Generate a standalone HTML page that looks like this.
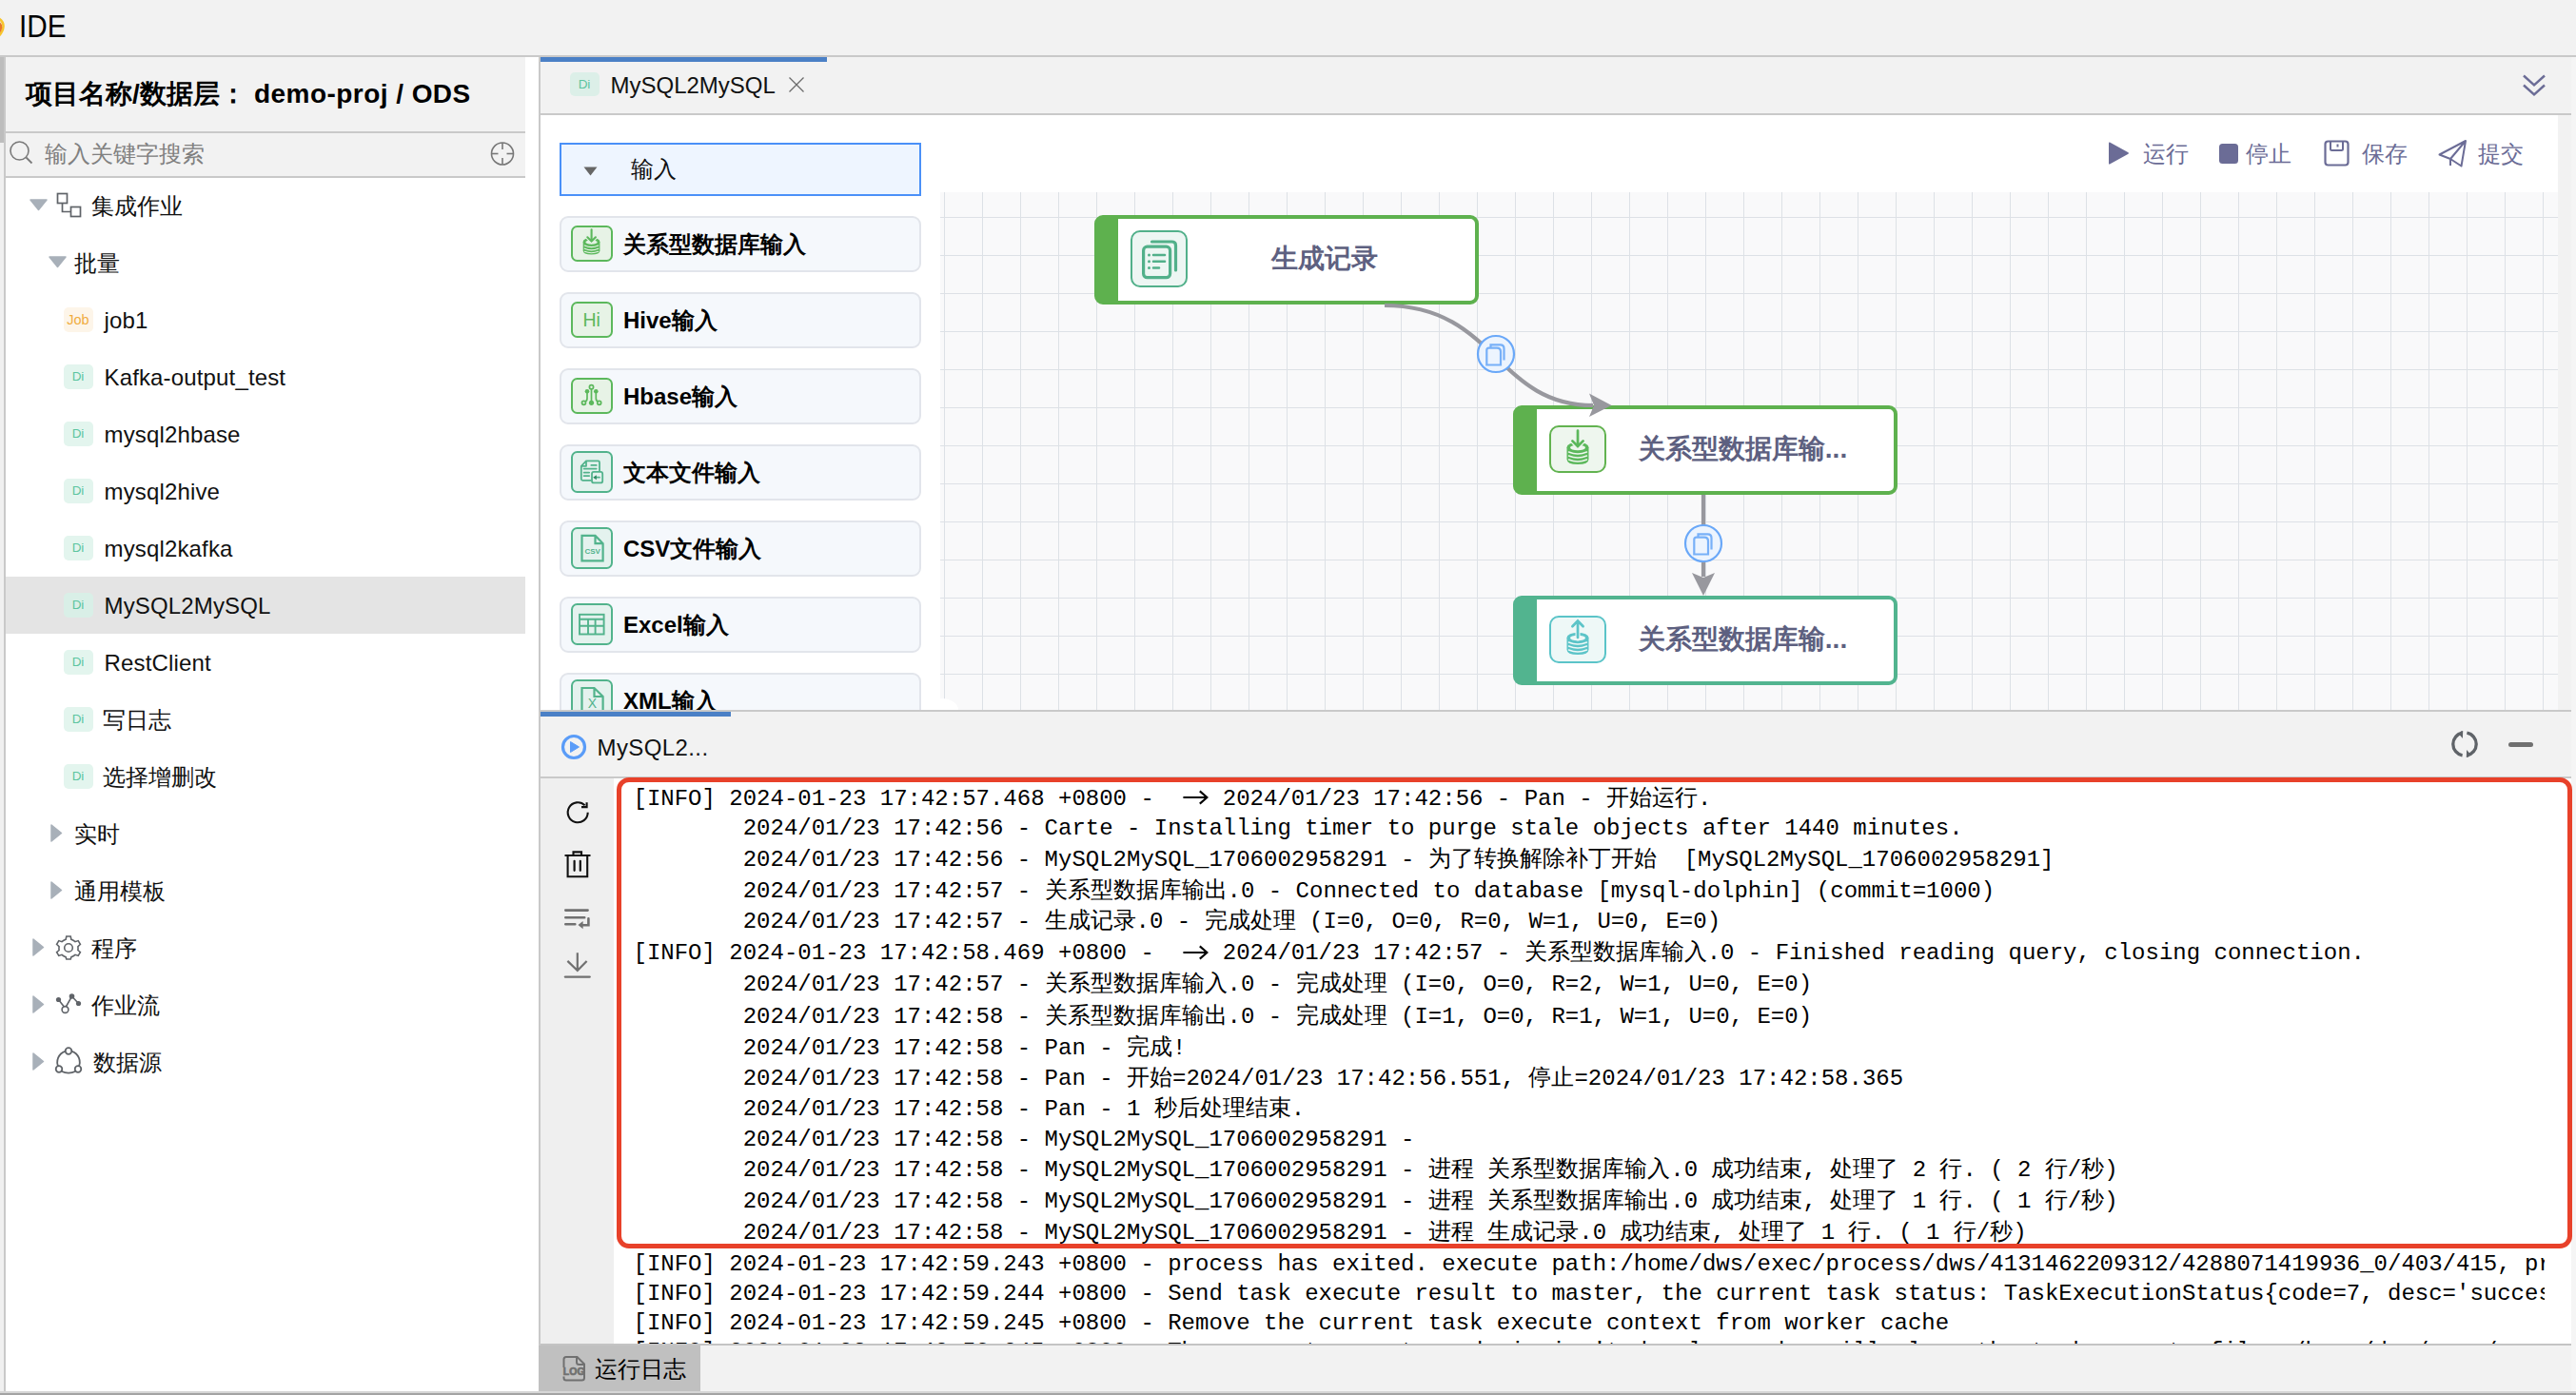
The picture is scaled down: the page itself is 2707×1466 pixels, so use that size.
<!DOCTYPE html>
<html><head><meta charset="utf-8"><style>
*{margin:0;padding:0;box-sizing:border-box}
html,body{width:2707px;height:1466px;overflow:hidden;background:#f2f2f2;font-family:"Liberation Sans",sans-serif;position:relative}
svg{position:absolute;overflow:visible}
</style></head><body>
<div style="position:absolute;left:0px;top:0px;width:2707px;height:58px;background:#f2f2f2"></div>
<svg style="left:0;top:15px" width="8" height="26" viewBox="0 0 8 26"><path d="M-6 2 Q4 6 3.5 13 Q3 20 -4 25" stroke="#f7c52c" stroke-width="2.5" fill="none"/><path d="M-6 6 Q1.5 9 1 14 Q0.5 19 -5 22" stroke="#e8772a" stroke-width="2.5" fill="none"/></svg>
<div style="position:absolute;left:20.4px;top:11.89px;height:32.5px;line-height:32.5px;font-size:32.5px;font-family:'Liberation Sans', sans-serif;white-space:pre;color:#000;transform:scaleX(0.915);transform-origin:0 0">IDE</div>
<div style="position:absolute;left:0px;top:58px;width:2707px;height:2px;background:#c9c9c9"></div>
<div style="position:absolute;left:0px;top:60px;width:5px;height:1402px;background:#f0f0f0"></div>
<div style="position:absolute;left:0px;top:60px;width:4px;height:90px;background:#bdbdbd"></div>
<div style="position:absolute;left:4px;top:60px;width:2px;height:1402px;background:#c9c9c9"></div>
<div style="position:absolute;left:6px;top:60px;width:560px;height:1402px;background:#fff"></div>
<div style="position:absolute;left:6px;top:60px;width:546px;height:78px;background:#f2f2f2"></div>
<div style="position:absolute;left:6px;top:138px;width:546px;height:2px;background:#c9c9c9"></div>
<div style="position:absolute;left:6px;top:140px;width:546px;height:45px;background:#f2f2f2"></div>
<div style="position:absolute;left:6px;top:185px;width:546px;height:2px;background:#c9c9c9"></div>
<div style="position:absolute;left:27px;top:85.10px;height:28px;line-height:28px;font-size:28px;font-family:'Liberation Sans', sans-serif;white-space:pre;font-weight:bold;color:#000">项目名称/数据层：<span style="letter-spacing:0.45px"> demo-proj / ODS</span></div>
<svg style="left:9px;top:147px" width="28" height="28" viewBox="0 0 28 28"><circle cx="11.5" cy="11.5" r="9.5" stroke="#7a7a7a" stroke-width="1.6" fill="none"/><line x1="18.5" y1="18.5" x2="24.5" y2="24.5" stroke="#7a7a7a" stroke-width="1.8"/></svg>
<div style="position:absolute;left:47px;top:149.68px;height:24px;line-height:24px;font-size:24px;font-family:'Liberation Sans', sans-serif;white-space:pre;color:#808080">输入关键字搜索</div>
<svg style="left:514px;top:148px" width="28" height="28" viewBox="0 0 28 28"><circle cx="14" cy="13.5" r="11.5" stroke="#777" stroke-width="1.6" fill="none"/><line x1="14" y1="2" x2="14" y2="9" stroke="#777" stroke-width="1.6"/><line x1="14" y1="18" x2="14" y2="25" stroke="#777" stroke-width="1.6"/><line x1="2.5" y1="13.5" x2="9.5" y2="13.5" stroke="#777" stroke-width="1.6"/><line x1="18.5" y1="13.5" x2="25.5" y2="13.5" stroke="#777" stroke-width="1.6"/></svg>
<div style="position:absolute;left:566px;top:60px;width:2px;height:1402px;background:#c9c9c9"></div>
<div style="position:absolute;left:6px;top:606px;width:546px;height:60px;background:#e4e4e4"></div>
<svg style="left:31px;top:209.0px" width="19" height="12" viewBox="0 0 19 12"><path d="M1 1 L18 1 L9.5 11.5 Z" fill="#a8b0b9" stroke="#a8b0b9" stroke-width="1.5" stroke-linejoin="round"/></svg>
<svg style="left:59px;top:202px" width="27" height="27" viewBox="0 0 27 27"><rect x="1.5" y="1.5" width="10" height="10" fill="none" stroke="#5f6368" stroke-width="1.7"/><rect x="15.5" y="15.5" width="10" height="10" fill="none" stroke="#5f6368" stroke-width="1.7"/><path d="M6.5 11.5 V20.5 H15.5" fill="none" stroke="#5f6368" stroke-width="1.7"/></svg>
<div style="position:absolute;left:96px;top:204.68px;height:24px;line-height:24px;font-size:24px;font-family:'Liberation Sans', sans-serif;white-space:pre;color:#111">集成作业</div>
<svg style="left:51px;top:269.0px" width="19" height="12" viewBox="0 0 19 12"><path d="M1 1 L18 1 L9.5 11.5 Z" fill="#a8b0b9" stroke="#a8b0b9" stroke-width="1.5" stroke-linejoin="round"/></svg>
<div style="position:absolute;left:78px;top:264.68px;height:24px;line-height:24px;font-size:24px;font-family:'Liberation Sans', sans-serif;white-space:pre;color:#111">批量</div>
<div style="position:absolute;left:67px;top:323.0px;width:31px;height:26px;border-radius:5px;background:#fdf5e9;color:#f0ac3e;font-size:14.5px;line-height:26px;text-align:center;text-indent:-1px;font-family:'Liberation Sans',sans-serif">Job</div>
<div style="position:absolute;left:109.5px;top:324.68px;height:24px;line-height:24px;font-size:24px;font-family:'Liberation Sans', sans-serif;white-space:pre;color:#111;letter-spacing:0.15px">job1</div>
<div style="position:absolute;left:67px;top:383.0px;width:31px;height:26px;border-radius:5px;background:#e3f5ee;color:#5cc5a0;font-size:13.5px;line-height:26px;text-align:center;text-indent:-1px;font-family:'Liberation Sans',sans-serif">Di</div>
<div style="position:absolute;left:109.5px;top:384.68px;height:24px;line-height:24px;font-size:24px;font-family:'Liberation Sans', sans-serif;white-space:pre;color:#111;letter-spacing:0.15px">Kafka-output_test</div>
<div style="position:absolute;left:67px;top:443.0px;width:31px;height:26px;border-radius:5px;background:#e3f5ee;color:#5cc5a0;font-size:13.5px;line-height:26px;text-align:center;text-indent:-1px;font-family:'Liberation Sans',sans-serif">Di</div>
<div style="position:absolute;left:109.5px;top:444.68px;height:24px;line-height:24px;font-size:24px;font-family:'Liberation Sans', sans-serif;white-space:pre;color:#111;letter-spacing:0.15px">mysql2hbase</div>
<div style="position:absolute;left:67px;top:503.0px;width:31px;height:26px;border-radius:5px;background:#e3f5ee;color:#5cc5a0;font-size:13.5px;line-height:26px;text-align:center;text-indent:-1px;font-family:'Liberation Sans',sans-serif">Di</div>
<div style="position:absolute;left:109.5px;top:504.68px;height:24px;line-height:24px;font-size:24px;font-family:'Liberation Sans', sans-serif;white-space:pre;color:#111;letter-spacing:0.15px">mysql2hive</div>
<div style="position:absolute;left:67px;top:563.0px;width:31px;height:26px;border-radius:5px;background:#e3f5ee;color:#5cc5a0;font-size:13.5px;line-height:26px;text-align:center;text-indent:-1px;font-family:'Liberation Sans',sans-serif">Di</div>
<div style="position:absolute;left:109.5px;top:564.68px;height:24px;line-height:24px;font-size:24px;font-family:'Liberation Sans', sans-serif;white-space:pre;color:#111;letter-spacing:0.15px">mysql2kafka</div>
<div style="position:absolute;left:67px;top:623.0px;width:31px;height:26px;border-radius:5px;background:#d9efe7;color:#5cc5a0;font-size:13.5px;line-height:26px;text-align:center;text-indent:-1px;font-family:'Liberation Sans',sans-serif">Di</div>
<div style="position:absolute;left:109.5px;top:624.68px;height:24px;line-height:24px;font-size:24px;font-family:'Liberation Sans', sans-serif;white-space:pre;color:#111;letter-spacing:0.15px">MySQL2MySQL</div>
<div style="position:absolute;left:67px;top:683.0px;width:31px;height:26px;border-radius:5px;background:#e3f5ee;color:#5cc5a0;font-size:13.5px;line-height:26px;text-align:center;text-indent:-1px;font-family:'Liberation Sans',sans-serif">Di</div>
<div style="position:absolute;left:109.5px;top:684.68px;height:24px;line-height:24px;font-size:24px;font-family:'Liberation Sans', sans-serif;white-space:pre;color:#111;letter-spacing:0.15px">RestClient</div>
<div style="position:absolute;left:67px;top:743.0px;width:31px;height:26px;border-radius:5px;background:#e3f5ee;color:#5cc5a0;font-size:13.5px;line-height:26px;text-align:center;text-indent:-1px;font-family:'Liberation Sans',sans-serif">Di</div>
<div style="position:absolute;left:108px;top:744.68px;height:24px;line-height:24px;font-size:24px;font-family:'Liberation Sans', sans-serif;white-space:pre;color:#111">写日志</div>
<div style="position:absolute;left:67px;top:803.0px;width:31px;height:26px;border-radius:5px;background:#e3f5ee;color:#5cc5a0;font-size:13.5px;line-height:26px;text-align:center;text-indent:-1px;font-family:'Liberation Sans',sans-serif">Di</div>
<div style="position:absolute;left:108px;top:804.68px;height:24px;line-height:24px;font-size:24px;font-family:'Liberation Sans', sans-serif;white-space:pre;color:#111">选择增删改</div>
<svg style="left:53px;top:865.5px" width="12" height="19" viewBox="0 0 12 19"><path d="M1 1 L11.5 9.5 L1 18 Z" fill="#a8b0b9" stroke="#a8b0b9" stroke-width="1.5" stroke-linejoin="round"/></svg>
<div style="position:absolute;left:78px;top:864.68px;height:24px;line-height:24px;font-size:24px;font-family:'Liberation Sans', sans-serif;white-space:pre;color:#111">实时</div>
<svg style="left:53px;top:925.5px" width="12" height="19" viewBox="0 0 12 19"><path d="M1 1 L11.5 9.5 L1 18 Z" fill="#a8b0b9" stroke="#a8b0b9" stroke-width="1.5" stroke-linejoin="round"/></svg>
<div style="position:absolute;left:78px;top:924.68px;height:24px;line-height:24px;font-size:24px;font-family:'Liberation Sans', sans-serif;white-space:pre;color:#111">通用模板</div>
<svg style="left:34px;top:985.5px" width="12" height="19" viewBox="0 0 12 19"><path d="M1 1 L11.5 9.5 L1 18 Z" fill="#a8b0b9" stroke="#a8b0b9" stroke-width="1.5" stroke-linejoin="round"/></svg>
<svg style="left:58px;top:982px" width="28" height="28" viewBox="0 0 28 28"><g transform="translate(14 14)" fill="none" stroke="#5f6368" stroke-width="1.6"><path d="M-2.2 -12 L2.2 -12 L2.9 -8.7 Q5.2 -7.9 7 -6.3 L10.2 -7.4 L12.4 -3.6 L9.9 -1.3 Q10.2 1.3 9.9 2.5 L12.4 4.6 L10.2 8.4 L7 7.3 Q5.2 8.9 2.9 9.7 L2.2 12 L-2.2 12 L-2.9 9.7 Q-5.2 8.9 -7 7.3 L-10.2 8.4 L-12.4 4.6 L-9.9 2.5 Q-10.2 1.3 -9.9 -1.3 L-12.4 -3.6 L-10.2 -7.4 L-7 -6.3 Q-5.2 -7.9 -2.9 -8.7 Z"/><circle r="4.3"/></g></svg>
<div style="position:absolute;left:96px;top:984.68px;height:24px;line-height:24px;font-size:24px;font-family:'Liberation Sans', sans-serif;white-space:pre;color:#111">程序</div>
<svg style="left:34px;top:1045.5px" width="12" height="19" viewBox="0 0 12 19"><path d="M1 1 L11.5 9.5 L1 18 Z" fill="#a8b0b9" stroke="#a8b0b9" stroke-width="1.5" stroke-linejoin="round"/></svg>
<svg style="left:58px;top:1043px" width="30" height="26" viewBox="0 0 30 26"><path d="M3.5 7.5 L10.5 16.5 L17.5 4 L24.5 11.5" fill="none" stroke="#5f6368" stroke-width="1.6"/><circle cx="3.5" cy="7.5" r="2.6" fill="#5f6368"/><circle cx="17.5" cy="4" r="2.8" fill="#5f6368"/><circle cx="24.5" cy="11.5" r="2.6" fill="#5f6368"/><circle cx="10.5" cy="18" r="3.4" fill="#fff" stroke="#5f6368" stroke-width="1.6"/></svg>
<div style="position:absolute;left:96px;top:1044.68px;height:24px;line-height:24px;font-size:24px;font-family:'Liberation Sans', sans-serif;white-space:pre;color:#111">作业流</div>
<svg style="left:34px;top:1105.5px" width="12" height="19" viewBox="0 0 12 19"><path d="M1 1 L11.5 9.5 L1 18 Z" fill="#a8b0b9" stroke="#a8b0b9" stroke-width="1.5" stroke-linejoin="round"/></svg>
<svg style="left:57px;top:1100px" width="30" height="30" viewBox="0 0 30 30"><path d="M11.3 4.8 A12 12 0 0 0 4.5 21.5 M18.7 4.8 A12 12 0 0 1 25.5 21.5 M7.5 25.7 Q15 29.5 22.5 25.7" fill="none" stroke="#5f6368" stroke-width="1.8"/><circle cx="15" cy="4.5" r="3.3" fill="#fff" stroke="#5f6368" stroke-width="1.8"/><circle cx="5" cy="23.5" r="3.3" fill="#fff" stroke="#5f6368" stroke-width="1.8"/><circle cx="25" cy="23.5" r="3.3" fill="#fff" stroke="#5f6368" stroke-width="1.8"/></svg>
<div style="position:absolute;left:98px;top:1104.68px;height:24px;line-height:24px;font-size:24px;font-family:'Liberation Sans', sans-serif;white-space:pre;color:#111">数据源</div>
<div style="position:absolute;left:568px;top:60px;width:2134px;height:59px;background:#f2f2f2"></div>
<div style="position:absolute;left:568px;top:119px;width:2134px;height:2px;background:#c9c9c9"></div>
<div style="position:absolute;left:2702px;top:60px;width:5px;height:1402px;background:#f5f5f5"></div>
<div style="position:absolute;left:568px;top:60px;width:301px;height:5px;background:#4b80c6"></div>
<div style="position:absolute;left:599px;top:76.0px;width:31px;height:25px;border-radius:5px;background:#dcefe8;color:#5cc5a0;font-size:13.5px;line-height:25px;text-align:center;text-indent:-1px;font-family:'Liberation Sans',sans-serif">Di</div>
<div style="position:absolute;left:641.5px;top:78.48px;height:24px;line-height:24px;font-size:24px;font-family:'Liberation Sans', sans-serif;white-space:pre;color:#111;letter-spacing:0px">MySQL2MySQL</div>
<svg style="left:828px;top:80px" width="18" height="18" viewBox="0 0 18 18"><path d="M1.5 1.5 L16.5 16.5 M16.5 1.5 L1.5 16.5" stroke="#6a6a6a" stroke-width="1.3"/></svg>
<svg style="left:2650px;top:77px" width="26" height="26" viewBox="0 0 26 26"><path d="M2 2.5 L13 12.5 L24 2.5 M2 12.5 L13 22.5 L24 12.5" fill="none" stroke="#6b6c96" stroke-width="2.4"/></svg>
<div style="position:absolute;left:568px;top:121px;width:2134px;height:625px;background:#fff"></div>
<div style="position:absolute;left:2688px;top:121px;width:14px;height:625px;background:#f2f2f2"></div>
<svg style="left:988px;top:202px" width="1700" height="544" viewBox="0 0 1700 544"><rect width="1700" height="544" fill="#f9f9fa"/><path d="M4.5 0 V544 M44.5 0 V544 M84.5 0 V544 M124.5 0 V544 M164.5 0 V544 M204.5 0 V544 M244.5 0 V544 M284.5 0 V544 M324.5 0 V544 M364.5 0 V544 M404.5 0 V544 M444.5 0 V544 M484.5 0 V544 M524.5 0 V544 M564.5 0 V544 M604.5 0 V544 M644.5 0 V544 M684.5 0 V544 M724.5 0 V544 M764.5 0 V544 M804.5 0 V544 M844.5 0 V544 M884.5 0 V544 M924.5 0 V544 M964.5 0 V544 M1004.5 0 V544 M1044.5 0 V544 M1084.5 0 V544 M1124.5 0 V544 M1164.5 0 V544 M1204.5 0 V544 M1244.5 0 V544 M1284.5 0 V544 M1324.5 0 V544 M1364.5 0 V544 M1404.5 0 V544 M1444.5 0 V544 M1484.5 0 V544 M1524.5 0 V544 M1564.5 0 V544 M1604.5 0 V544 M1644.5 0 V544 M1684.5 0 V544 M0 26.5 H1700 M0 66.5 H1700 M0 106.5 H1700 M0 146.5 H1700 M0 186.5 H1700 M0 226.5 H1700 M0 266.5 H1700 M0 306.5 H1700 M0 346.5 H1700 M0 386.5 H1700 M0 426.5 H1700 M0 466.5 H1700 M0 506.5 H1700 " stroke="#dde1e6" stroke-width="1" fill="none"/></svg>
<div style="position:absolute;left:988px;top:734px;width:19px;height:12px;background:#fff;border-top-right-radius:19px 13px"></div>
<div style="position:absolute;left:568px;top:121px;width:420px;height:625px;overflow:hidden;background:#fff">
<div style="position:absolute;left:20px;top:29px;width:380px;height:56px;border:2px solid #4a90f8;background:#eef5ff"></div>
<svg style="left:45px;top:54px" width="15" height="10" viewBox="0 0 15 10"><path d="M0.5 0.5 L14.5 0.5 L7.5 9.5 Z" fill="#666"/></svg>
<div style="position:absolute;left:20px;top:105.5px;width:380px;height:59px;border:2px solid #e2e5eb;border-radius:9px;background:#f5f8fc"></div>
<div style="position:absolute;left:32.2px;top:116.3px;width:43.6px;height:37.3px;border:2px solid #5cb85c;border-radius:6.5px;background:#e7f3e6"></div>
<svg style="left:32.2px;top:116.3px" width="44" height="37.3" viewBox="0 0 44 37.3"><path d="M12.7 17 V26.5 Q12.7 30.6 21.5 30.6 Q30.4 30.6 30.4 26.5 V17 Z" fill="#5cb85c"/><ellipse cx="21.55" cy="17" rx="8.85" ry="4.2" fill="#5cb85c"/><ellipse cx="21.55" cy="17.4" rx="6.2" ry="2.1" fill="#e4f2e4"/><path d="M14.3 21 Q21.5 24.2 28.8 21 M14.3 24.2 Q21.5 27.4 28.8 24.2 M14.3 27.3 Q21.5 30.2 28.8 27.3" fill="none" stroke="#e4f2e4" stroke-width="1.2" stroke-linecap="round"/><path d="M21.6 3.8 V17.5 M16.6 11.6 L21.6 16.8 L26.6 11.6" fill="none" stroke="#e4f2e4" stroke-width="4.2" stroke-linecap="round"/><path d="M21.6 4.4 V16.5 M17.3 12.3 L21.6 16.6 L25.9 12.3" fill="none" stroke="#5cb85c" stroke-width="2.1" stroke-linecap="round"/></svg>
<div style="position:absolute;left:87px;top:123.88px;height:24px;line-height:24px;font-size:24px;font-family:'Liberation Sans', sans-serif;white-space:pre;font-weight:bold;color:#000;letter-spacing:0px">关系型数据库输入</div>
<div style="position:absolute;left:20px;top:185.5px;width:380px;height:59px;border:2px solid #e2e5eb;border-radius:9px;background:#f5f8fc"></div>
<div style="position:absolute;left:32.2px;top:196.4px;width:43.6px;height:37.3px;border:2px solid #5cb85c;border-radius:6.5px;background:#e7f3e6"></div>
<svg style="left:32.2px;top:196.4px" width="44" height="37.3" viewBox="0 0 44 37.3"><text x="21.7" y="25.6" text-anchor="middle" font-family="Liberation Sans" font-size="19.5" fill="#5cb85c">Hi</text></svg>
<div style="position:absolute;left:87px;top:203.88px;height:24px;line-height:24px;font-size:24px;font-family:'Liberation Sans', sans-serif;white-space:pre;font-weight:bold;color:#000;letter-spacing:0px">Hive输入</div>
<div style="position:absolute;left:20px;top:265.5px;width:380px;height:59px;border:2px solid #e2e5eb;border-radius:9px;background:#f5f8fc"></div>
<div style="position:absolute;left:32.2px;top:276.4px;width:43.6px;height:37.3px;border:2px solid #5cb85c;border-radius:6.5px;background:#e7f3e6"></div>
<svg style="left:32.2px;top:276.4px" width="44" height="37.3" viewBox="0 0 44 37.3"><g fill="none" stroke="#5cb85c" stroke-width="1.7"><path d="M21.5 11.5 V26 M17 14.3 V21.5 Q17 24.5 14.8 25 M26.3 14.3 V21.5 Q26.3 24.5 28.6 25"/><circle cx="21.5" cy="9.7" r="2.1"/><circle cx="13.5" cy="26.3" r="2"/><circle cx="29.7" cy="26.3" r="2"/></g><g fill="#5cb85c"><circle cx="17" cy="14.3" r="2.3"/><circle cx="26.3" cy="14.3" r="2.3"/><circle cx="21.5" cy="26.3" r="2.6"/></g></svg>
<div style="position:absolute;left:87px;top:283.88px;height:24px;line-height:24px;font-size:24px;font-family:'Liberation Sans', sans-serif;white-space:pre;font-weight:bold;color:#000;letter-spacing:0px">Hbase输入</div>
<div style="position:absolute;left:20px;top:345.5px;width:380px;height:59px;border:2px solid #e2e5eb;border-radius:9px;background:#f5f8fc"></div>
<div style="position:absolute;left:32.2px;top:353.1px;width:43.6px;height:43.8px;border:2px solid #52b38c;border-radius:6.5px;background:#e4f2ee"></div>
<svg style="left:32.2px;top:353.1px" width="44" height="43.8" viewBox="0 0 44 43.8"><g fill="none" stroke="#52b38c" stroke-width="1.8" stroke-linejoin="round"><path d="M21.5 30.8 H12.3 Q10.8 30.8 10.8 29.3 V15.8 L16 10.4 H28.5 Q30 10.4 30 11.9 V21.5"/><path d="M10.8 15.8 H16 V10.4"/><rect x="22" y="21.9" width="11.2" height="11.5" rx="2"/></g><g stroke="#52b38c" stroke-width="1.7" stroke-linecap="round"><path d="M21.3 14.9 H26.7 M13.6 18.6 H26.7 M13.6 22.6 H19.2 M13.6 26.1 H19.2 M30 27.7 H25.5"/></g><path d="M23.2 27.7 L26.8 25.2 V30.2 Z" fill="#2f8a62"/></svg>
<div style="position:absolute;left:87px;top:363.88px;height:24px;line-height:24px;font-size:24px;font-family:'Liberation Sans', sans-serif;white-space:pre;font-weight:bold;color:#000;letter-spacing:0px">文本文件输入</div>
<div style="position:absolute;left:20px;top:425.5px;width:380px;height:59px;border:2px solid #e2e5eb;border-radius:9px;background:#f5f8fc"></div>
<div style="position:absolute;left:32.2px;top:433.1px;width:43.6px;height:43.8px;border:2px solid #52b38c;border-radius:6.5px;background:#e4f2ee"></div>
<svg style="left:32.2px;top:433.1px" width="44" height="43.8" viewBox="0 0 44 43.8"><g fill="none" stroke="#52b38c" stroke-width="2.2" stroke-linejoin="miter"><path d="M11.5 8.9 H25.5 L33.6 17.1 V35.3 H11.5 Z M25.5 8.9 V17.1 H33.6"/></g><text x="22.6" y="28.2" text-anchor="middle" font-family="Liberation Sans" font-size="8" font-weight="bold" fill="#52b38c">CSV</text></svg>
<div style="position:absolute;left:87px;top:443.88px;height:24px;line-height:24px;font-size:24px;font-family:'Liberation Sans', sans-serif;white-space:pre;font-weight:bold;color:#000;letter-spacing:0px">CSV文件输入</div>
<div style="position:absolute;left:20px;top:505.5px;width:380px;height:59px;border:2px solid #e2e5eb;border-radius:9px;background:#f5f8fc"></div>
<div style="position:absolute;left:32.2px;top:513.1px;width:43.6px;height:43.8px;border:2px solid #52b38c;border-radius:6.5px;background:#e4f2ee"></div>
<svg style="left:32.2px;top:513.1px" width="44" height="43.8" viewBox="0 0 44 43.8"><g fill="none" stroke="#52b38c" stroke-width="1.9"><rect x="9" y="11.8" width="25.6" height="20.7"/><path d="M9 16.8 H34.6 M9 23.7 H34.6 M18 16.8 V32.5 M25.6 16.8 V32.5"/></g></svg>
<div style="position:absolute;left:87px;top:523.88px;height:24px;line-height:24px;font-size:24px;font-family:'Liberation Sans', sans-serif;white-space:pre;font-weight:bold;color:#000;letter-spacing:0px">Excel输入</div>
<div style="position:absolute;left:20px;top:585.5px;width:380px;height:59px;border:2px solid #e2e5eb;border-radius:9px;background:#f5f8fc"></div>
<div style="position:absolute;left:32.2px;top:593.1px;width:43.6px;height:43.8px;border:2px solid #52b38c;border-radius:6.5px;background:#e4f2ee"></div>
<svg style="left:32.2px;top:593.1px" width="44" height="43.8" viewBox="0 0 44 43.8"><g fill="none" stroke="#52b38c" stroke-width="2.2"><path d="M11.5 9 H24.5 L33.6 18 V45 H11.5 Z M24.5 9 V18 H33.6"/></g><text x="22.3" y="30" text-anchor="middle" font-family="Liberation Sans" font-size="14" fill="#52b38c">X</text></svg>
<div style="position:absolute;left:87px;top:603.88px;height:24px;line-height:24px;font-size:24px;font-family:'Liberation Sans', sans-serif;white-space:pre;font-weight:bold;color:#000;letter-spacing:0px">XML输入</div>
<div style="position:absolute;left:95px;top:44.68px;height:24px;line-height:24px;font-size:24px;font-family:'Liberation Sans', sans-serif;white-space:pre;color:#111">输入</div>
</div>
<svg style="left:2214px;top:147px" width="26" height="28" viewBox="0 0 26 28"><path d="M3 2.5 Q2 2 2 3.5 V24.5 Q2 26 3 25.5 L22.5 14.8 Q23.5 14 22.5 13.2 Z" fill="#6b6c96"/></svg>
<div style="position:absolute;left:2252px;top:150.18px;height:24px;line-height:24px;font-size:24px;font-family:'Liberation Sans', sans-serif;white-space:pre;color:#6b6c96">运行</div>
<div style="position:absolute;left:2332px;top:151px;width:20px;height:21px;background:#6b6c96;border-radius:3.5px"></div>
<div style="position:absolute;left:2360px;top:150.18px;height:24px;line-height:24px;font-size:24px;font-family:'Liberation Sans', sans-serif;white-space:pre;color:#6b6c96">停止</div>
<svg style="left:2442px;top:147px" width="28" height="28" viewBox="0 0 28 28"><rect x="1.5" y="1.5" width="24" height="25" rx="3" fill="none" stroke="#6b6c96" stroke-width="2.2"/><path d="M7 2 V9.5 Q7 11 8.5 11 H18.5 Q20 11 20 9.5 V2" fill="none" stroke="#6b6c96" stroke-width="2"/><line x1="14.5" y1="4.5" x2="14.5" y2="7.5" stroke="#6b6c96" stroke-width="2"/></svg>
<div style="position:absolute;left:2482px;top:150.18px;height:24px;line-height:24px;font-size:24px;font-family:'Liberation Sans', sans-serif;white-space:pre;color:#6b6c96">保存</div>
<svg style="left:2562px;top:146px" width="32" height="30" viewBox="0 0 32 30"><path d="M1.5 16.5 L29 2 L24.5 28.5 L13 21 Z M29 2 L13 21 V28" fill="none" stroke="#6b6c96" stroke-width="2" stroke-linejoin="round"/></svg>
<div style="position:absolute;left:2604px;top:150.18px;height:24px;line-height:24px;font-size:24px;font-family:'Liberation Sans', sans-serif;white-space:pre;color:#6b6c96">提交</div>
<div style="position:absolute;left:1150px;top:226px;width:404px;height:94px;border:4px solid #5eb14e;border-left:25px solid #5eb14e;border-radius:9px;background:#fff"></div>
<div style="position:absolute;left:1188px;top:242.0px;width:60px;height:60px;border:2px solid #52b08a;border-radius:10px;background:#edf6f3"></div>
<svg style="left:1188px;top:242.0px" width="60" height="60" viewBox="0 0 60 60"><g fill="none" stroke="#52b08a" stroke-width="3.2" stroke-linecap="round"><rect x="13.6" y="17.2" width="28" height="32.5" rx="4"/><path d="M22.5 12 H43.5 Q47.5 12 47.5 16 V42"/></g><g fill="#52b08a"><circle cx="19.5" cy="26" r="1.5"/><circle cx="19.5" cy="32.8" r="1.5"/><circle cx="19.5" cy="39.5" r="1.5"/></g><g stroke="#52b08a" stroke-width="2.6" stroke-linecap="round"><path d="M24 26 H36 M24 32.8 H36 M24 39.5 H30"/></g></svg>
<div style="position:absolute;left:1250px;top:258.10px;height:28px;line-height:28px;font-size:28px;font-family:'Liberation Sans', sans-serif;white-space:pre;font-weight:bold;color:#5d6080;width:283px;text-align:center">生成记录</div>
<div style="position:absolute;left:1590px;top:426px;width:404px;height:94px;border:4px solid #5eb14e;border-left:25px solid #5eb14e;border-radius:9px;background:#fff"></div>
<div style="position:absolute;left:1628px;top:446.5px;width:60px;height:50px;border:2px solid #62b350;border-radius:10px;background:#eef6ee"></div>
<svg style="left:1628px;top:446.5px" width="60" height="50" viewBox="0 0 60 50"><path d="M18.5 23 V35.5 Q18.5 41 30 41 Q41.5 41 41.5 35.5 V23 Z" fill="#5cb85c"/><ellipse cx="30" cy="23" rx="11.5" ry="5.2" fill="#5cb85c"/><ellipse cx="30" cy="23.5" rx="8" ry="2.7" fill="#eef6ee"/><path d="M20.5 28 Q30 32 39.5 28 M20.5 32 Q30 36 39.5 32 M20.5 36 Q30 40 39.5 36" fill="none" stroke="#eef6ee" stroke-width="1.5" stroke-linecap="round"/><path d="M30 5 V23.5 M23.6 15.6 L30 22.5 L36.4 15.6" fill="none" stroke="#eef6ee" stroke-width="5" stroke-linecap="round"/><path d="M30 5.5 V22 M24.4 16.4 L30 22 L35.6 16.4" fill="none" stroke="#5cb85c" stroke-width="2.7" stroke-linecap="round"/></svg>
<div style="position:absolute;left:1690px;top:458.30px;height:28px;line-height:28px;font-size:28px;font-family:'Liberation Sans', sans-serif;white-space:pre;font-weight:bold;color:#5d6080;width:283px;text-align:center">关系型数据库输...</div>
<div style="position:absolute;left:1590px;top:626px;width:404px;height:94px;border:4px solid #52b48f;border-left:25px solid #52b48f;border-radius:9px;background:#fff"></div>
<div style="position:absolute;left:1628px;top:646.5px;width:60px;height:50px;border:2px solid #5bc4c8;border-radius:10px;background:#eef8f7"></div>
<svg style="left:1628px;top:646.5px" width="60" height="50" viewBox="0 0 60 50"><path d="M18.5 23 V35.5 Q18.5 41 30 41 Q41.5 41 41.5 35.5 V23 Z" fill="#5cc4c8"/><ellipse cx="30" cy="23" rx="11.5" ry="5.2" fill="#5cc4c8"/><ellipse cx="30" cy="23.5" rx="8" ry="2.7" fill="#eef8f7"/><path d="M20.5 28 Q30 32 39.5 28 M20.5 32 Q30 36 39.5 32 M20.5 36 Q30 40 39.5 36" fill="none" stroke="#eef8f7" stroke-width="1.5" stroke-linecap="round"/><path d="M30 24 V5 M23.6 11.6 L30 5 L36.4 11.6" fill="none" stroke="#eef8f7" stroke-width="5" stroke-linecap="round"/><path d="M30 23 V5.5 M24.4 11.2 L30 5.5 L35.6 11.2" fill="none" stroke="#5cc4c8" stroke-width="2.7" stroke-linecap="round"/></svg>
<div style="position:absolute;left:1690px;top:658.30px;height:28px;line-height:28px;font-size:28px;font-family:'Liberation Sans', sans-serif;white-space:pre;font-weight:bold;color:#5d6080;width:283px;text-align:center">关系型数据库输...</div>
<svg style="left:0;top:0" width="2707" height="1466" viewBox="0 0 2707 1466"><path d="M1455 321 C1572 321 1572 426 1674 426" fill="none" stroke="#98989e" stroke-width="4.2"/><path d="M1693.5 426 L1670 413.5 L1675 426 L1670 438 Z" fill="#98989e"/><path d="M1790 520 V606" fill="none" stroke="#98989e" stroke-width="4.2"/><path d="M1790 626 L1778 602 L1790 607 L1802 602 Z" fill="#98989e"/></svg>
<svg style="left:1551.4px;top:351px" width="42" height="42" viewBox="0 0 42 42"><g><circle cx="21" cy="21" r="19" fill="#ecf4fe" stroke="#6aa8f8" stroke-width="2.2"/><path d="M15.5 14.5 V11.4 H25.5 Q29.5 11.4 29.5 15.4 V27.5" fill="none" stroke="#77b0f8" stroke-width="2.2"/><path d="M11.3 17 Q11.3 14.6 13.7 14.6 H22 Q26 14.6 26 18.6 V32.5 H11.3 Z" fill="#ecf4fe" stroke="#77b0f8" stroke-width="2.2"/></g></svg>
<svg style="left:1769px;top:549.6px" width="42" height="42" viewBox="0 0 42 42"><g><circle cx="21" cy="21" r="19" fill="#ecf4fe" stroke="#6aa8f8" stroke-width="2.2"/><path d="M15.5 14.5 V11.4 H25.5 Q29.5 11.4 29.5 15.4 V27.5" fill="none" stroke="#77b0f8" stroke-width="2.2"/><path d="M11.3 17 Q11.3 14.6 13.7 14.6 H22 Q26 14.6 26 18.6 V32.5 H11.3 Z" fill="#ecf4fe" stroke="#77b0f8" stroke-width="2.2"/></g></svg>
<div style="position:absolute;left:568px;top:746px;width:2134px;height:2px;background:#c9c9c9"></div>
<div style="position:absolute;left:568px;top:748px;width:2134px;height:68px;background:#f2f2f2"></div>
<div style="position:absolute;left:568px;top:748px;width:200px;height:5px;background:#4b80c6"></div>
<svg style="left:589px;top:771px" width="28" height="28" viewBox="0 0 28 28"><circle cx="14" cy="14" r="11.5" fill="none" stroke="#5a9cf8" stroke-width="3.2"/><path d="M10.5 8.5 L19.5 14 L10.5 19.5 Z" fill="#5a9cf8" stroke="#5a9cf8" stroke-width="1" stroke-linejoin="round"/></svg>
<div style="position:absolute;left:627.5px;top:773.68px;height:24px;line-height:24px;font-size:24px;font-family:'Liberation Sans', sans-serif;white-space:pre;color:#111;letter-spacing:0.4px">MySQL2...</div>
<svg style="left:2574px;top:766px" width="32" height="32" viewBox="0 0 32 32"><path d="M13.6 4.2 A12 12 0 0 0 13.6 27.8" fill="none" stroke="#5f6368" stroke-width="3.3"/><path d="M18.4 4.2 A12 12 0 0 1 18.4 27.8" fill="none" stroke="#5f6368" stroke-width="3.3"/><path d="M12 2.4 L14.2 2 L13.9 10 L10 5.6 Z M20 29.6 L17.8 30 L18.1 22 L22 26.4 Z" fill="#5f6368"/></svg>
<div style="position:absolute;left:2636px;top:779.5px;width:26px;height:5.5px;background:#707070;border-radius:3px"></div>
<div style="position:absolute;left:568px;top:816px;width:2134px;height:2px;background:#c9c9c9"></div>
<div style="position:absolute;left:568px;top:818px;width:77px;height:594px;background:#efefef"></div>
<div style="position:absolute;left:645px;top:818px;width:2057px;height:594px;background:#fff"></div>
<svg style="left:593px;top:840px" width="30" height="30" viewBox="0 0 30 30"><path d="M24.7 13.7 A10.5 10.5 0 1 1 21.6 6.3" fill="none" stroke="#111" stroke-width="2.1"/><path d="M18 8.1 H23.6 V3.2" fill="none" stroke="#111" stroke-width="2.1"/></svg>
<svg style="left:592px;top:893px" width="30" height="30" viewBox="0 0 30 30"><path d="M1.5 6 H28.5 M10.5 6 V2.4 H19 V6 M4.6 6 V28.3 H25.2 V6" fill="none" stroke="#111" stroke-width="2.1"/><path d="M11.6 11.8 V21.8 M17.8 11.8 V21.8" fill="none" stroke="#111" stroke-width="2.2" stroke-linecap="round"/></svg>
<svg style="left:593px;top:954px" width="30" height="26" viewBox="0 0 30 26"><path d="M1.3 2.6 H24.6 M1.3 10.3 H21.2 M1.3 17.2 H11.3" fill="none" stroke="#707070" stroke-width="2.6" stroke-linecap="round"/><path d="M25.4 11.4 V18.2 H19" fill="none" stroke="#707070" stroke-width="2.6" stroke-linecap="round"/><path d="M14.5 18 L19.6 14 V22.2 Z" fill="#707070"/></svg>
<svg style="left:592px;top:999px" width="30" height="30" viewBox="0 0 30 30"><path d="M14.8 2.2 V20.5 M4.4 10.9 L14.8 21 L24.6 10.9" fill="none" stroke="#707070" stroke-width="2.2"/><path d="M2 27.6 H27.6" fill="none" stroke="#707070" stroke-width="2.4" stroke-linecap="round"/></svg>
<div style="position:absolute;left:645px;top:818px;width:2029px;height:594px;overflow:hidden">
<div style="position:absolute;left:20.5px;top:9.60px;height:24px;line-height:24px;font-size:24px;font-family:'Liberation Mono', monospace;white-space:pre;color:#000">[INFO] 2024-01-23 17:42:57.468 +0800 -  <span style="display:inline-block;width:28.8px;height:0;position:relative"><svg style="left:0;top:-14.3px" width="29" height="14" viewBox="0 0 29 14"><path d="M1.4 7 H26.4 M18.8 0.4 L26.4 7 L18.8 13.6" fill="none" stroke="#000" stroke-width="2.1"/></svg></span> 2024/01/23 17:42:56 - Pan - 开始运行.</div>
<div style="position:absolute;left:20.5px;top:40.80px;height:24px;line-height:24px;font-size:24px;font-family:'Liberation Mono', monospace;white-space:pre;color:#000">        2024/01/23 17:42:56 - Carte - Installing timer to purge stale objects after 1440 minutes.</div>
<div style="position:absolute;left:20.5px;top:73.90px;height:24px;line-height:24px;font-size:24px;font-family:'Liberation Mono', monospace;white-space:pre;color:#000">        2024/01/23 17:42:56 - MySQL2MySQL_1706002958291 - 为了转换解除补丁开始  [MySQL2MySQL_1706002958291]</div>
<div style="position:absolute;left:20.5px;top:106.60px;height:24px;line-height:24px;font-size:24px;font-family:'Liberation Mono', monospace;white-space:pre;color:#000">        2024/01/23 17:42:57 - 关系型数据库输出.0 - Connected to database [mysql-dolphin] (commit=1000)</div>
<div style="position:absolute;left:20.5px;top:139.20px;height:24px;line-height:24px;font-size:24px;font-family:'Liberation Mono', monospace;white-space:pre;color:#000">        2024/01/23 17:42:57 - 生成记录.0 - 完成处理 (I=0, O=0, R=0, W=1, U=0, E=0)</div>
<div style="position:absolute;left:20.5px;top:172.30px;height:24px;line-height:24px;font-size:24px;font-family:'Liberation Mono', monospace;white-space:pre;color:#000">[INFO] 2024-01-23 17:42:58.469 +0800 -  <span style="display:inline-block;width:28.8px;height:0;position:relative"><svg style="left:0;top:-14.3px" width="29" height="14" viewBox="0 0 29 14"><path d="M1.4 7 H26.4 M18.8 0.4 L26.4 7 L18.8 13.6" fill="none" stroke="#000" stroke-width="2.1"/></svg></span> 2024/01/23 17:42:57 - 关系型数据库输入.0 - Finished reading query, closing connection.</div>
<div style="position:absolute;left:20.5px;top:205.40px;height:24px;line-height:24px;font-size:24px;font-family:'Liberation Mono', monospace;white-space:pre;color:#000">        2024/01/23 17:42:57 - 关系型数据库输入.0 - 完成处理 (I=0, O=0, R=2, W=1, U=0, E=0)</div>
<div style="position:absolute;left:20.5px;top:238.60px;height:24px;line-height:24px;font-size:24px;font-family:'Liberation Mono', monospace;white-space:pre;color:#000">        2024/01/23 17:42:58 - 关系型数据库输出.0 - 完成处理 (I=1, O=0, R=1, W=1, U=0, E=0)</div>
<div style="position:absolute;left:20.5px;top:271.60px;height:24px;line-height:24px;font-size:24px;font-family:'Liberation Mono', monospace;white-space:pre;color:#000">        2024/01/23 17:42:58 - Pan - 完成!</div>
<div style="position:absolute;left:20.5px;top:303.70px;height:24px;line-height:24px;font-size:24px;font-family:'Liberation Mono', monospace;white-space:pre;color:#000">        2024/01/23 17:42:58 - Pan - 开始=2024/01/23 17:42:56.551, 停止=2024/01/23 17:42:58.365</div>
<div style="position:absolute;left:20.5px;top:336.40px;height:24px;line-height:24px;font-size:24px;font-family:'Liberation Mono', monospace;white-space:pre;color:#000">        2024/01/23 17:42:58 - Pan - 1 秒后处理结束.</div>
<div style="position:absolute;left:20.5px;top:368.30px;height:24px;line-height:24px;font-size:24px;font-family:'Liberation Mono', monospace;white-space:pre;color:#000">        2024/01/23 17:42:58 - MySQL2MySQL_1706002958291 -</div>
<div style="position:absolute;left:20.5px;top:400.40px;height:24px;line-height:24px;font-size:24px;font-family:'Liberation Mono', monospace;white-space:pre;color:#000">        2024/01/23 17:42:58 - MySQL2MySQL_1706002958291 - 进程 关系型数据库输入.0 成功结束, 处理了 2 行. ( 2 行/秒)</div>
<div style="position:absolute;left:20.5px;top:433.10px;height:24px;line-height:24px;font-size:24px;font-family:'Liberation Mono', monospace;white-space:pre;color:#000">        2024/01/23 17:42:58 - MySQL2MySQL_1706002958291 - 进程 关系型数据库输出.0 成功结束, 处理了 1 行. ( 1 行/秒)</div>
<div style="position:absolute;left:20.5px;top:465.80px;height:24px;line-height:24px;font-size:24px;font-family:'Liberation Mono', monospace;white-space:pre;color:#000">        2024/01/23 17:42:58 - MySQL2MySQL_1706002958291 - 进程 生成记录.0 成功结束, 处理了 1 行. ( 1 行/秒)</div>
<div style="position:absolute;left:20.5px;top:498.50px;height:24px;line-height:24px;font-size:24px;font-family:'Liberation Mono', monospace;white-space:pre;color:#000">[INFO] 2024-01-23 17:42:59.243 +0800 - process has exited. execute path:/home/dws/exec/process/dws/4131462209312/4288071419936_0/403/415, process id:12345, exit</div>
<div style="position:absolute;left:20.5px;top:529.90px;height:24px;line-height:24px;font-size:24px;font-family:'Liberation Mono', monospace;white-space:pre;color:#000">[INFO] 2024-01-23 17:42:59.244 +0800 - Send task execute result to master, the current task status: TaskExecutionStatus{code=7, desc='success'}</div>
<div style="position:absolute;left:20.5px;top:561.20px;height:24px;line-height:24px;font-size:24px;font-family:'Liberation Mono', monospace;white-space:pre;color:#000">[INFO] 2024-01-23 17:42:59.245 +0800 - Remove the current task execute context from worker cache</div>
<div style="position:absolute;left:20.5px;top:590.60px;height:24px;line-height:24px;font-size:24px;font-family:'Liberation Mono', monospace;white-space:pre;color:#000">[INFO] 2024-01-23 17:42:59.245 +0800 - The current execute mode is isn't develop mode, will clear the task execute file: /home/dws/exec/process</div>
</div>
<div style="position:absolute;left:647.5px;top:816.5px;width:2055.5px;height:495px;border:5.5px solid #e8412a;border-radius:13px"></div>
<div style="position:absolute;left:568px;top:1412px;width:2134px;height:2px;background:#c4c4c4"></div>
<div style="position:absolute;left:568px;top:1414px;width:2134px;height:48px;background:#f2f2f2"></div>
<div style="position:absolute;left:566px;top:1414px;width:170px;height:48px;background:#c0c0c0"></div>
<svg style="left:590px;top:1424px" width="28" height="28" viewBox="0 0 28 28"><path d="M2.5 13 V4.5 Q2.5 2 5 2 H16.5 L24 9.5 V24 Q24 26.5 21.5 26.5 H5 Q2.5 26.5 2.5 24 V22.5" fill="none" stroke="#707070" stroke-width="2"/><path d="M16 2 V7.5 Q16 10 18.5 10 H24" fill="none" stroke="#707070" stroke-width="2"/><text x="13.2" y="21" text-anchor="middle" font-family="Liberation Sans" font-weight="bold" font-size="10.5" fill="#707070" stroke="#707070" stroke-width="0.7">LOG</text></svg>
<div style="position:absolute;left:625px;top:1427.18px;height:24px;line-height:24px;font-size:24px;font-family:'Liberation Sans', sans-serif;white-space:pre;color:#000">运行日志</div>
<div style="position:absolute;left:0px;top:1462px;width:2707px;height:2px;background:#d6d6d6"></div>
<div style="position:absolute;left:0px;top:1464px;width:2707px;height:2px;background:#a3a3a3"></div>
</body></html>
